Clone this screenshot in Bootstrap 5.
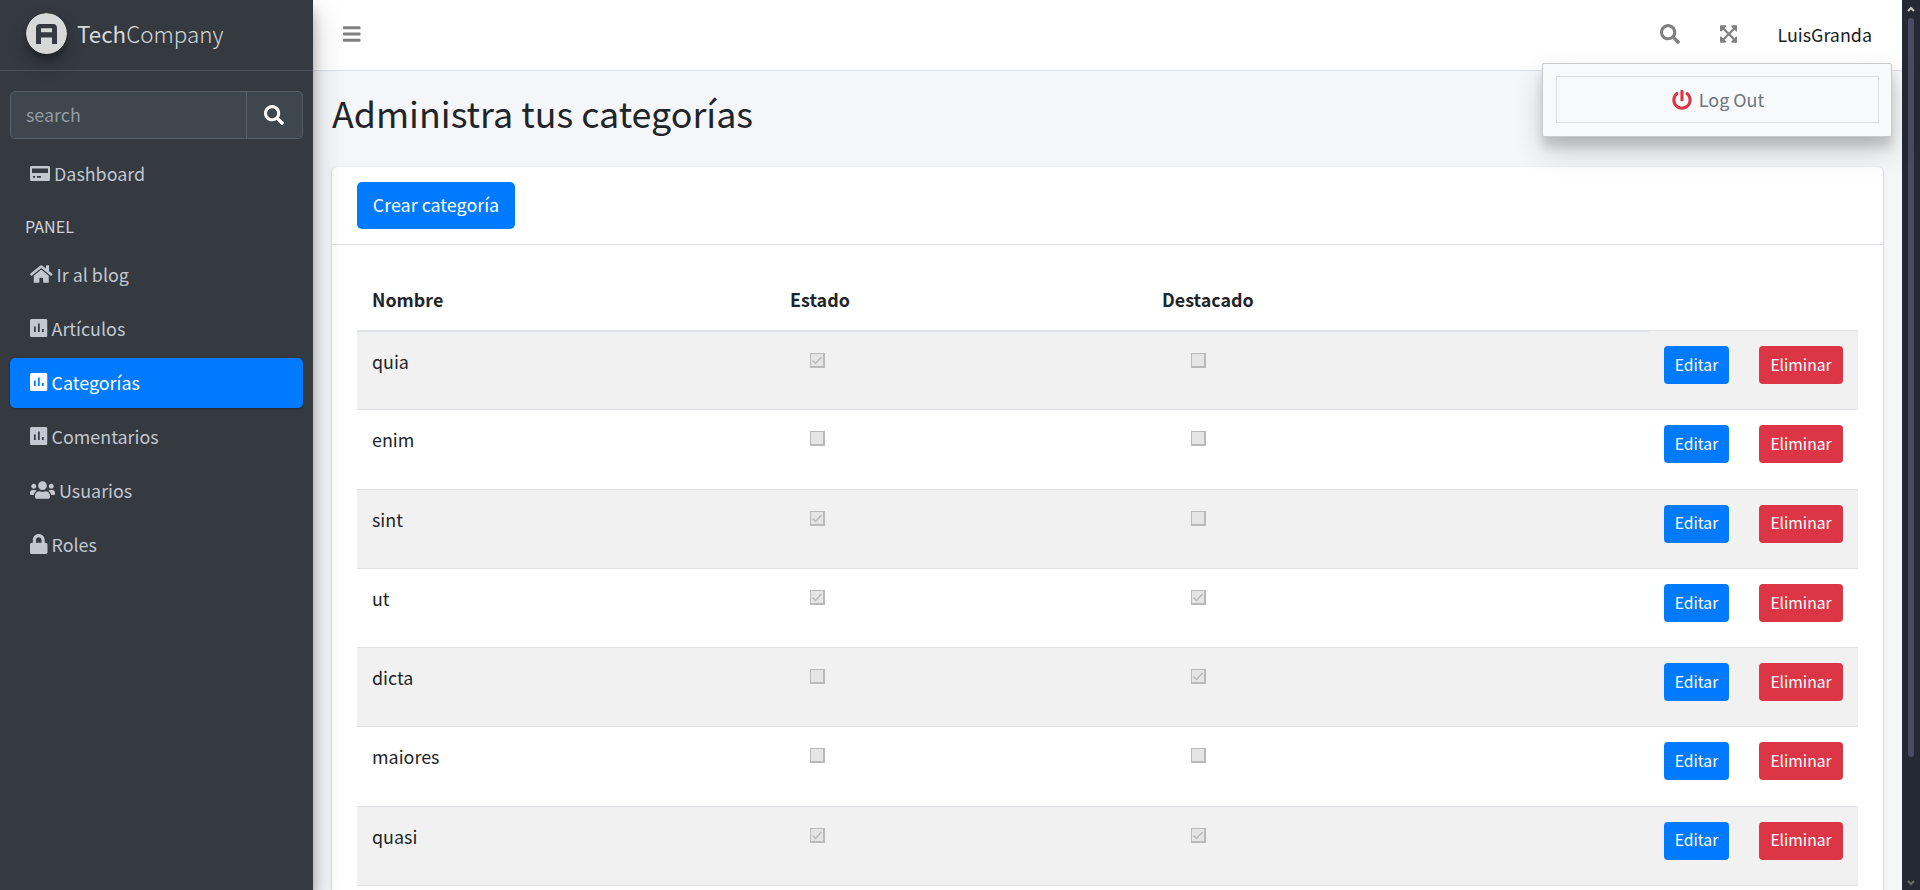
<!DOCTYPE html>
<html lang="es">
<head>
<meta charset="utf-8">
<title>TechCompany | Categorías</title>
<link rel="stylesheet" href="https://cdn.jsdelivr.net/npm/bootstrap@5.3.0/dist/css/bootstrap.min.css">
<script src="https://cdn.jsdelivr.net/npm/bootstrap@5.3.0/dist/js/bootstrap.bundle.min.js"></script>
<style>
html,body{height:100%;overflow:hidden}
body{font-family:"Noto Sans CJK SC","Open Sans",sans-serif;font-size:17.9px;line-height:30px;color:#212529;background:#f4f6f9}
svg{fill:currentColor;display:block;flex:none}
.shell{height:890px}
.side{width:313px;background:#343a40;color:#c2c7d0;box-shadow:0 14px 28px rgba(0,0,0,.25),0 10px 10px rgba(0,0,0,.22);z-index:3}
.brand{height:71px;border-bottom:1px solid #4b545c;padding:0 0 3px 26px;color:#d6d8d9;font-size:22.4px}
.brand svg{border-radius:50%;box-shadow:0 10px 20px rgba(0,0,0,.19),0 6px 6px rgba(0,0,0,.23)}
.brand .txt{margin-left:10px;font-weight:300;padding-bottom:2px}
.brand b{font-weight:400}
.find{margin:20px 10px 10px;height:48px;border:1px solid #56606a;border-radius:5px;background:#3f474e;color:#939ba2}
.find .q{width:236px;padding:0 0 2px 15px;border-right:1px solid #56606a}
.find .go{color:#fff;padding-left:17px}
.item{margin:0 10px 4px;height:50px;padding:0 0 2px 20px;border-radius:5px;gap:4px}
.item.on{background:#007bff;color:#fff;box-shadow:0 1px 3px rgba(0,0,0,.12),0 1px 2px rgba(0,0,0,.24)}
.hd{height:47px;padding:0 0 2px 25px;font-size:16.1px;color:#d0d4db;margin-top:3px}
.main{width:1589px}
.top{height:71px;background:#fff;border-bottom:1px solid #dee2e6;color:#808080;padding:0 30px 2px 30px}
.top .name{color:#1c1c1c;margin-left:40px;padding-bottom:1px}
.menu{position:absolute;left:1542px;top:63px;width:350px;height:74px;background:#f8f9fa;border:1px solid #c9cbcd;border-radius:2px;padding:12px 12px 12px 13px;box-shadow:0 14px 28px rgba(0,0,0,.18),0 10px 10px rgba(0,0,0,.12);z-index:5}
.menu .out{border:1px solid #ddd;height:47px;color:#6c757d;gap:7px;padding-left:1px}
.menu span{padding-bottom:2px}
h1{font-size:35.8px;font-weight:400;line-height:48px;margin:17px 0 31px 19px}
.panel{margin:0 19px;background:#fff;border-radius:5px 5px 0 0;box-shadow:0 0 1px rgba(0,0,0,.13),0 1px 3px rgba(0,0,0,.2);height:900px}
.ph{height:78px;border-bottom:1px solid #dfdfdf;padding:15px 25px}
.btn{--bs-btn-font-size:17.9px;border:0;padding:0 0 1px;line-height:1;border-radius:5px}
.btn-primary{--bs-btn-bg:#007bff}
.btn-danger{--bs-btn-bg:#dc3545}
.new{width:158px;height:47px;padding-bottom:2px}
.ed,.el{--bs-btn-font-size:15.67px;height:38px;border-radius:4px}
.ed{width:65px}.el{width:84px}
.grid{width:1501px;margin:25px 25px 0;table-layout:fixed;border-collapse:separate;border-spacing:0}
.grid th{height:62px;padding:0 15px 2px;border-bottom:2px solid #dee2e6;vertical-align:middle;font-weight:700}
.grid th:last-child{border-bottom:0;box-shadow:inset 0 -1px #f1f1f1,inset 0 -2px #dee2e6}
.grid td{height:79.3px;padding:14px 15px;vertical-align:top;border-bottom:1px solid #dee2e6}
.grid td:nth-child(n+4){padding-top:15px}
.grid tr:first-child td{height:78.3px}
.grid tbody tr:first-child td{padding-top:14px}
.grid tbody tr:nth-child(odd) td{background:#f1f1f1}
.ck{margin:7px 0 0 20px}
td:nth-child(3) .ck{margin-left:29px}
.sb{width:18px;background:#252933;padding:6px 0 4px}
.sb .thumb{width:6px;height:739px;border-radius:3px;background:#4a4b63;margin-top:6px}
</style>
</head>
<body>
<svg class="d-none">
<symbol id="search" viewBox="0 0 512 512"><path d="M505 442.7L405.3 343c-4.5-4.5-10.6-7-17-7H372c27.6-35.3 44-79.7 44-128C416 93.1 322.9 0 208 0S0 93.1 0 208s93.1 208 208 208c48.3 0 92.7-16.4 128-44v16.3c0 6.4 2.5 12.5 7 17l99.7 99.7c9.4 9.4 24.6 9.4 33.9 0l28.3-28.3c9.4-9.4 9.4-24.6.1-34zM208 336c-70.7 0-128-57.2-128-128 0-70.7 57.2-128 128-128 70.7 0 128 57.2 128 128 0 70.7-57.2 128-128 128z"/></symbol>
<symbol id="poll" viewBox="0 0 17.500 20"><path fill-rule="evenodd" d="M1.500 1H16Q17.500 1 17.500 2.500v15q0 1.500-1.500 1.500H1.500Q0 19 0 17.500v-15Q0 1 1.500 1zM4 8.500V14h1.700V8.500zM8 5.500V14h1.700V5.500zM12 11v3h1.700v-3z"/></symbol>
</svg>
<div class="shell d-flex">
<aside class="side position-relative flex-shrink-0">
<div class="brand d-flex align-items-center"><svg width="41" height="41" viewBox="0 0 41 41"><circle cx="20.500" cy="20.500" r="20.500" fill="#d6d8d9"/><path fill="#343a40" fill-rule="evenodd" d="M10 31V15q0-4 4-4h13q4 0 4 4v16h-5v-6.500H15V31zM15 15.300V19.300h11v-4z"/></svg><span class="txt"><b>Tech</b>Company</span></div>
<div class="find d-flex align-items-stretch"><div class="q d-flex align-items-center">search</div><div class="go d-flex align-items-center"><svg width="20" height="20"><use href="#search"/></svg></div></div>
<div class="item d-flex align-items-center"><svg width="20" height="20" viewBox="0 0 20 20"><path fill-rule="evenodd" d="M1.500 3h17Q20 3 20 4.500v12q0 1.500-1.500 1.500h-17Q0 18 0 16.500v-12Q0 3 1.500 3zM2 5.500V10h16V5.500zM3 13v1.700h2V13zM7 13v1.700h4V13z"/></svg>Dashboard</div>
<div class="hd d-flex align-items-center">PANEL</div>
<div class="item d-flex align-items-center"><svg width="22.500" height="20" viewBox="0 0 576 512"><path d="M280.370 148.260L96 300.110V464a16 16 0 0 0 16 16l112.060-.290a16 16 0 0 0 15.920-16V368a16 16 0 0 1 16-16h64a16 16 0 0 1 16 16v95.640a16 16 0 0 0 16 16.050L464 480a16 16 0 0 0 16-16V300L295.670 148.260a12.190 12.190 0 0 0-15.300 0zM571.600 251.470L488 182.560V44.050a12 12 0 0 0-12-12h-56a12 12 0 0 0-12 12v72.610L318.470 43a48 48 0 0 0-61 0L4.340 251.470a12 12 0 0 0-1.600 16.900l25.500 31A12 12 0 0 0 45.150 301l235.220-193.740a12.190 12.190 0 0 1 15.300 0L530.900 301a12 12 0 0 0 16.900-1.600l25.500-31a12 12 0 0 0-1.700-16.930z"/></svg>Ir al blog</div>
<div class="item d-flex align-items-center"><svg width="17.500" height="20"><use href="#poll"/></svg>Artículos</div>
<div class="item on d-flex align-items-center"><svg width="17.500" height="20"><use href="#poll"/></svg>Categorías</div>
<div class="item d-flex align-items-center"><svg width="17.500" height="20"><use href="#poll"/></svg>Comentarios</div>
<div class="item d-flex align-items-center"><svg width="25" height="20" viewBox="0 0 640 512"><path d="M96 224c35.300 0 64-28.700 64-64s-28.700-64-64-64-64 28.700-64 64 28.700 64 64 64zm448 0c35.300 0 64-28.700 64-64s-28.700-64-64-64-64 28.700-64 64 28.700 64 64 64zm32 32h-64c-17.600 0-33.500 7.100-45.100 18.600 40.300 22.100 68.900 62 75.100 109.400h66c17.700 0 32-14.300 32-32v-32c0-35.300-28.700-64-64-64zm-256 0c61.900 0 112-50.100 112-112S381.900 32 320 32 208 82.100 208 144s50.100 112 112 112zm76.800 32h-8.300c-20.800 10-43.900 16-68.500 16s-47.600-6-68.500-16h-8.300C179.600 288 128 339.600 128 403.200V432c0 26.500 21.500 48 48 48h288c26.500 0 48-21.500 48-48v-28.800c0-63.600-51.600-115.200-115.200-115.200zm-223.700-13.400C161.500 263.100 145.600 256 128 256H64c-35.300 0-64 28.700-64 64v32c0 17.700 14.300 32 32 32h65.900c6.300-47.400 34.900-87.300 75.200-109.400z"/></svg>Usuarios</div>
<div class="item d-flex align-items-center"><svg width="17.500" height="20" viewBox="0 0 448 512"><path d="M400 224h-24v-72C376 68.200 307.800 0 224 0S72 68.200 72 152v72H48c-26.500 0-48 21.500-48 48v192c0 26.500 21.500 48 48 48h352c26.500 0 48-21.500 48-48V272c0-26.500-21.500-48-48-48zm-104 0H152v-72c0-39.700 32.300-72 72-72s72 32.300 72 72v72z"/></svg>Roles</div>
</aside>
<main class="main flex-shrink-0 overflow-hidden">
<nav class="top d-flex align-items-center"><svg width="17.500" height="20" viewBox="0 0 448 512"><path d="M16 132h416c8.837 0 16-7.163 16-16V76c0-8.837-7.163-16-16-16H16C7.163 60 0 67.163 0 76v40c0 8.837 7.163 16 16 16zm0 160h416c8.837 0 16-7.163 16-16v-40c0-8.837-7.163-16-16-16H16c-8.837 0-16 7.163-16 16v40c0 8.837 7.163 16 16 16zm0 160h416c8.837 0 16-7.163 16-16v-40c0-8.837-7.163-16-16-16H16c-8.837 0-16 7.163-16 16v40c0 8.837 7.163 16 16 16z"/></svg>
<svg class="ms-auto" width="20" height="20"><use href="#search"/></svg>
<svg style="margin-left:40px" width="17.500" height="20" viewBox="0 0 448 512"><path d="M448 344v112a23.940 23.940 0 0 1-24 24H312c-21.390 0-32.090-25.900-17-41l36.200-36.200L224 295.600 116.770 402.900 153 439c15.090 15.100 4.390 41-17 41H24a23.940 23.940 0 0 1-24-24V344c0-21.400 25.890-32.100 41-17l36.190 36.200L184.460 256 77.180 148.700 41 185c-15.100 15.100-41 4.400-41-17V56a23.940 23.940 0 0 1 24-24h112c21.390 0 32.090 25.900 17 41l-36.200 36.200L224 216.400l107.230-107.300L295 73c-15.090-15.100-4.390-41 17-41h112a23.940 23.940 0 0 1 24 24v112c0 21.400-25.890 32.100-41 17l-36.190-36.200L263.540 256l107.280 107.300L407 327.100c15.100-15.200 41-4.500 41 16.900z"/></svg>
<span class="name">LuisGranda</span></nav>
<div class="menu"><div class="out d-flex align-items-center justify-content-center"><svg width="20" height="20" viewBox="0 0 512 512"><path fill="#dc3545" d="M400 54.100c63 45 104 118.600 104 201.900 0 136.800-110.800 247.700-247.500 248C120 504.300 8.200 393 8 256.400 7.900 173.100 48.900 99.300 111.800 54.200c11.700-8.300 28-4.800 35 7.700L162.600 90c5.900 10.500 3.100 23.800-6.600 31-41.500 30.800-68 79.600-68 134.900-.1 92.300 74.500 168.100 168 168.100 91.600 0 168.600-74.200 168-169.100-.3-51.800-24.700-101.800-68.100-134-9.700-7.200-12.400-20.500-6.500-30.900l15.800-28.100c7-12.400 23.200-16.100 34.800-7.800zM296 264V24c0-13.300-10.700-24-24-24h-32c-13.300 0-24 10.700-24 24v240c0 13.300 10.700 24 24 24h32c13.300 0 24-10.700 24-24z"/></svg><span>Log Out</span></div></div>
<h1>Administra tus categorías</h1>
<section class="panel">
<div class="ph"><button class="btn btn-primary new">Crear categoría</button></div>
<table class="grid"><colgroup><col style="width:418px"><col style="width:372px"><col style="width:502px"><col style="width:95px"><col style="width:114px"></colgroup>
<thead><tr><th>Nombre</th><th>Estado</th><th>Destacado</th><th colspan="2"></th></tr></thead><tbody id="rows"></tbody></table>
</section>
</main>
<div class="sb d-flex flex-column align-items-center"><svg width="8" height="6" viewBox="0 0 8 6"><path d="M1 5l3-3 3 3" fill="none" stroke="#c8c8c8" stroke-width="2"/></svg><div class="thumb"></div><svg class="mt-auto" width="8" height="6" viewBox="0 0 8 6"><path d="M1 1l3 3 3-3" fill="none" stroke="#6c6c6c" stroke-width="2"/></svg></div>
</div>
<script>
const box = on => `<svg class="ck" width="15" height="15" viewBox="0 0 15 15"><path fill="#b9b9b9" d="M0 0h15v15H0z"/><path fill="#e5e5e5" d="M1 1h12v12H1z"/>${on ? '<path d="M2.500 7.500L5.500 10.500 11.500 4" fill="none" stroke="#b9b9b9" stroke-width="1.500"/>' : ''}</svg>`;
document.getElementById('rows').innerHTML = [['quia',1,0],['enim',0,0],['sint',1,0],['ut',1,1],['dicta',0,1],['maiores',0,0],['quasi',1,1]]
 .map(([n,a,b]) => `<tr><td>${n}</td><td>${box(a)}</td><td>${box(b)}</td><td><button class="btn btn-primary ed d-block">Editar</button></td><td><button class="btn btn-danger el d-block">Eliminar</button></td></tr>`).join('');
</script>
</body>
</html>
